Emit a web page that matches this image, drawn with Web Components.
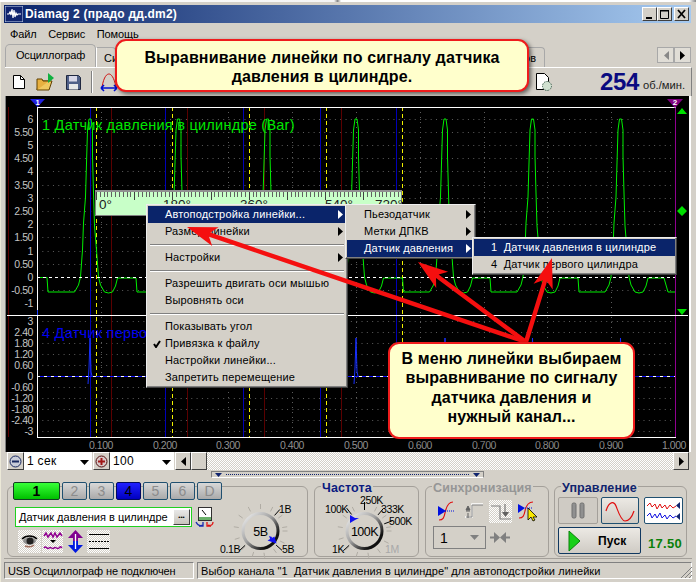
<!DOCTYPE html>
<html><head><meta charset="utf-8"><title>Diamag 2</title>
<style>
html,body{margin:0;padding:0;width:696px;height:582px;overflow:hidden;background:#d4d0c8}
body{font:11px "Liberation Sans",Arial,sans-serif;color:#000}
</style></head><body>
<dm-app>
  <dm-title slot="main" label="Diamag 2 (прадо дд.dm2)"></dm-title>
  <dm-menubar slot="main"></dm-menubar>
  <dm-tabs slot="main"></dm-tabs>
  <dm-toolbar slot="main"></dm-toolbar>
  <dm-scope slot="main"></dm-scope>
  <dm-ctrl slot="main"></dm-ctrl>
  <dm-split slot="main"></dm-split>
  <dm-panel slot="main"></dm-panel>
  <dm-status slot="main"></dm-status>

  <dm-ruler slot="over"></dm-ruler>
  <dm-popup slot="over" style="left:146px;top:204px;width:202px">
    <dm-item hl arrow>Автоподстройка линейки...</dm-item>
    <dm-item arrow>Размер линейки</dm-item>
    <dm-sep></dm-sep>
    <dm-item arrow>Настройки</dm-item>
    <dm-sep></dm-sep>
    <dm-item>Разрешить двигать оси мышью</dm-item>
    <dm-item>Выровнять оси</dm-item>
    <dm-sep></dm-sep>
    <dm-item>Показывать угол</dm-item>
    <dm-item check>Привязка к файлу</dm-item>
    <dm-item>Настройки линейки...</dm-item>
    <dm-item>Запретить перемещение</dm-item>
  </dm-popup>
  <dm-popup slot="over" style="left:345px;top:204px;width:131px">
    <dm-item arrow>Пьезодатчик</dm-item>
    <dm-item arrow>Метки ДПКВ</dm-item>
    <dm-item hl arrow>Датчик давления</dm-item>
  </dm-popup>
  <dm-popup slot="over" style="left:472px;top:237px;width:205px">
    <dm-item hl wide>1  Датчик давления в цилиндре</dm-item>
    <dm-item wide>4  Датчик первого цилиндра</dm-item>
  </dm-popup>
  <dm-arrows slot="over"></dm-arrows>
  <dm-callout slot="over" style="left:115px;top:39px;width:414px;height:53px;font-size:16px;line-height:19px;padding-top:2px;letter-spacing:.15px">Выравнивание линейки по сигналу датчика<br>давления в цилиндре.</dm-callout>
  <dm-callout slot="over" style="left:388px;top:342px;width:247px;height:97px;font-size:16px;line-height:19.3px;padding-bottom:6px;letter-spacing:.1px">В меню линейки выбираем<br>выравнивание по сигналу<br>датчика давления и<br>нужный канал...</dm-callout>
</dm-app>
<script>
const TXT="font-family:'Liberation Sans',Arial,sans-serif;";
const DITHER='repeating-conic-gradient(#fff 0 25%,#d4d0c8 0 50%) 0 0/2px 2px';
function def(name,css,html,init){
  customElements.define(name,class extends HTMLElement{
    constructor(){super();const s=this.attachShadow({mode:'open'});
      s.innerHTML='<style>'+css+'</style>'+(typeof html==='function'?html(this):html);}
    connectedCallback(){if(init)init(this);}
  });
}
/* ---------- app shell ---------- */
def('dm-app',`:host{display:block;position:relative;width:696px;height:582px;overflow:hidden;background:#d4d0c8}
.sl{height:2px;background:linear-gradient(90deg,#fff,#f4f4f4 48%,#888 48.5%,#fff 49%,#fff 99%,#888)}
.w{display:flex;flex-direction:column;height:580px;border-left:1px solid #ece9d8;box-sizing:border-box}
::slotted(*){flex:none}
`,`<div class="sl"></div><div class="w"><slot name="main"></slot></div><slot name="over"></slot>`);

def('dm-title',`:host{display:flex;align-items:center;height:18px;margin:3px 5px 0 3px;padding-left:1px;
 background:linear-gradient(90deg,#0a246a,#a6caf0);color:#fff;font:bold 12px "Liberation Sans",sans-serif;letter-spacing:.2px}
svg.i{margin-right:2px;flex:none}.t{flex:1;white-space:pre}
.b{width:15px;height:14px;box-sizing:border-box;background:#d4d0c8;border:1px solid;border-color:#fff #404040 #404040 #fff;flex:none;display:block}
.r{display:flex;margin-right:2px}.b svg{display:block}`,
 t=>`<svg class="i" width="18" height="16" viewBox="0 0 18 16"><rect width="18" height="16" fill="#10246e" stroke="#c8d8f0"/><path d="M2 8h2l1-2 1 3 1-6 1 9 1-8 1 7 1-4 1 2 1-1h3" fill="none" stroke="#fff" stroke-width="1.2"/></svg><span class="t">${t.getAttribute('label')}</span>
 <div class="r"><span class="b"><svg width="13" height="12"><rect x="3" y="9" width="6" height="2"/></svg></span><span class="b" style="margin-right:2px"><svg width="13" height="12"><path d="M2.5 2.5h8v8h-8z" fill="none" stroke="#000"/><path d="M2 2h9v1.5H2z"/></svg></span><span class="b"><svg width="13" height="12"><path d="M3 2l7 8M10 2l-7 8" stroke="#000" stroke-width="1.8"/></svg></span></div>`);

def('dm-menubar',`:host{display:flex;height:19px;align-items:center;gap:11.500px;padding-left:9px;margin-top:1px;letter-spacing:-.1px}`,
 `<span>Файл</span><span>Сервис</span><span>Помощь</span>`);

def('dm-tabs',`:host{display:flex;height:24px;align-items:flex-end;padding-left:4px;position:relative}
.a{width:91px;height:23px;box-sizing:border-box;border:1px solid #a8a8a8;border-bottom:0;border-radius:5px 5px 0 0;background:#d4d0c8;display:flex;align-items:center;justify-content:center;letter-spacing:-.15px;padding-bottom:2px}
.o{height:20px;box-sizing:border-box;border:1px solid #a8a8a8;border-left-color:#fff;border-bottom:0;background:#d4d0c8;border-radius:0 4px 0 0;display:flex;align-items:center;justify-content:flex-end;padding-right:8px}
.n{margin-left:auto;margin-right:5px;margin-bottom:4px;display:flex}
.n i{width:17px;height:16px;box-sizing:border-box;border:1px solid #a8a8a8;display:flex;align-items:center;justify-content:center;background:#e0ddd6}`,
 `<div class="a">Осциллограф</div><div class="o" style="width:20px;padding:0 0 0 7px;justify-content:flex-start">Си</div><div class="o" style="width:429px">ов</div>
 <div class="n"><i><svg width="6" height="9"><path d="M6 0v9L1 4.500z" fill="#888"/></svg></i><i><svg width="6" height="9"><path d="M0 0v9l5-4.500z"/></svg></i></div>`);

def('dm-toolbar',`:host{display:flex;height:29px;align-items:center;margin:0 4px;box-sizing:border-box;border-top:1px solid #fff;border-right:1px solid #808080;padding-left:7px}
svg{display:block;flex:none}.sp{flex:1}
.n{font:bold 24px "Liberation Sans",sans-serif;color:#0a0a80;letter-spacing:-.4px;margin:0 4px 0 0;position:relative}
.u{color:#202020;margin-right:6px;padding-top:5px;font-size:11.2px}`,
 `<svg width="14" height="16" style="margin-right:10px"><path d="M1.500 1.500h7l4 4v9h-11z" fill="#fff" stroke="#000"/><path d="M8.500 1.500v4h4" fill="none" stroke="#000"/></svg>
 <svg width="19" height="19" style="margin-right:11px"><path d="M1 17l2-9h13l-3 9z" fill="#f0c860" stroke="#604000"/><path d="M1 17V6h5l1 2h6" fill="#e8b040" stroke="#604000"/><path d="M12 0l6 5-6 5z" fill="#10b040"/></svg>
 <svg width="15" height="15" style="margin-right:10px"><path d="M.5.5h12l2 2v12H.5z" fill="#506088" stroke="#202840"/><rect x="3" y="1" width="8" height="5.500" fill="#d8d8e8"/><rect x="3" y="9" width="9" height="5.500" fill="#e8e8e8"/></svg>
 <svg width="2" height="22" style="margin-right:7px"><rect width="1" height="22" fill="#808080"/><rect x="1" width="1" height="22" fill="#fff"/></svg>
 <svg width="20" height="20"><path d="M2 15C4 4 7 2 9 2s5 3 7 13" fill="none" stroke="#d01010"/><path d="M1 16h16M1 16l3-3M1 16l3 3M17 16l-3-3M17 16l-3 3" stroke="#0010d0" stroke-width="1.600" fill="none"/></svg>
 <span class="sp"></span>
 <svg width="18" height="20" style="margin-right:47px"><path d="M1.500 1.500h8l4 4v12h-12z" fill="#fff" stroke="#000"/><circle cx="12" cy="14" r="4.500" fill="#d0e0d0" stroke="#406050" stroke-dasharray="1.500 1"/></svg>
 <span class="n">254</span><span class="u">об./мин.</span>`);

/* ---------- scope ---------- */
def('dm-scope',`:host{display:flex;height:356px;margin-left:4px;margin-right:5px;box-sizing:border-box;border-right:2px solid #fff;border-top:0}
svg{display:block;flex:none}`,
()=>{
 let o='';
 const L=37,R=675,T=107,B=437;
 const dot=(x1,y1,x2,y2,da,c)=>`<line x1="${x1}" y1="${y1}" x2="${x2}" y2="${y2}" stroke="${c||'#5c5c5c'}" stroke-dasharray="${da}"/>`;
 const hl=(x,c,d)=>`<line x1="${x+.5}" y1="${T}" x2="${x+.5}" y2="${B}" stroke="${c}" ${d?`stroke-dasharray="${d}"`:''}/>`;
 for(let k=-1;k<=12;k++){if(k==0)continue;o+=dot(L,Math.round(277-13.2*k)+.5,R,Math.round(277-13.2*k)+.5,'1 4.320');}
 for(let k=-5;k<=5;k++){if(k==0)continue;o+=dot(L,376.5-11*k,R,376.5-11*k,'1 4.320');}
 for(let k=1;k<10;k++){const x=Math.round(37+63.8*k)+.5;o+=dot(x,T,x,B,'1 4');}
 [8,111,187,264,341].forEach(x=>o+=hl(x,'#5a0000'));
 [90,165,243,320,396].forEach(x=>o+=hl(x,'#0000b8'));
 [96,172,249,326,402].forEach(x=>o+=hl(x,'#f0f000','4 3'));
 o+=hl(675,'#900090');
 /* traces */
 const P=[89.5,178,267,355.5,444.5,532,620];
 const pulse=p=>`L${p-15} 292L${p-11} 285L${p-9} 277L${p-7} 250L${p-6} 223L${p-4} 197L${p-3} 163L${p-2} 130L${p-.5} 119L${p+1.500} 119L${p+3} 130L${p+3} 156L${p+4} 193L${p+5} 226L${p+7} 250L${p+9} 277L${p+11} 285L${p+15} 292L${p+19} 293L${p+23} 292L${p+26} 286L${p+28} 278`;
 let d=`M37 277.500H47L48 292`;
 P.forEach((p,i)=>{d+=pulse(p);const n=P[i+1];if(n)d+=`H${n-42}L${n-41} 292`;});
 d+=`L664 278L668 292H675`;
 o+=`<path d="${d}" fill="none" stroke="#00f000"/>`;
 o+=`<line x1="${L}" y1="277.500" x2="${R}" y2="277.500" stroke="#fff" stroke-dasharray="3 3"/>`;
 o+=`<line x1="${L}" y1="376.500" x2="${R}" y2="376.500" stroke="#1010ff" stroke-width="1"/><line x1="${L}" y1="376.500" x2="${R}" y2="376.500" stroke="#fff" stroke-dasharray="3 4"/>`;
 P.forEach((p,i)=>{const q=p-1.500;o+=`<path d="M${q} 384L${q+1} 368L${q+2} 338L${q+3} 372L${q+4} 376" fill="none" stroke="#1830ff"/>`;});
 /* axes */
 o+=`<path d="M37.500 107V310M37.500 316V437M${L} 437.500H${R+1}M${L} 107.500H${R+1}" stroke="#fff" fill="none"/><path d="M37.500 310V316" stroke="#2040ff"/><path d="M7 315.500H688" stroke="#fff"/>`;
 /* labels */
 const gt=(x,y,t,a,c)=>`<text x="${x}" y="${y}" text-anchor="${a}" fill="${c}" style="${TXT}font-size:10.5px;letter-spacing:-.45px">${t}</text>`;
 ['6','5.50','5','4.50','4','3.50','3','2.50','2','1.50','1','0.50','0','-0.50','-1'].forEach((t,i)=>o+=gt(33,Math.round(118.600+13.2*i)+4,t,'end','#c4c4c4'));
 ['3','2.40','1.80','1.20','0.60','0','-0.60','-1.20','-1.80','-2.40','-3'].forEach((t,i)=>o+=gt(33,321+11*i+4,t,'end','#c4c4c4'));
 ['0.100','0.200','0.300','0.400','0.500','0.600','0.700','0.800','0.900'].forEach((t,i)=>o+=gt(Math.round(37+63.8*(i+1)),449,t,'middle','#909090'));
 o+=gt(674,449,'1.000','middle','#909090');
 o+=`<text x="42" y="130" fill="#00e800" style="${TXT}font-size:14.5px;letter-spacing:.25px">1 Датчик давления в цилиндре (Bar)</text>`;
 o+=`<text x="42" y="338" fill="#0000f0" style="${TXT}font-size:14.5px;letter-spacing:.25px">4 Датчик первого цилиндра</text>`;
 /* markers */
 o+=`<path d="M30 99H45L37.500 107z" fill="#2020e0"/><text x="37.500" y="105" text-anchor="middle" fill="#fff" style="${TXT}font-size:7.500px;font-weight:bold">1</text>`;
 o+=`<path d="M667 99H683L675 108z" fill="#800080"/><text x="675" y="105" text-anchor="middle" fill="#fff" style="${TXT}font-size:8px;font-weight:bold">2</text>`;
 o+=`<path d="M682 108l5 6h-10zM682 206l5 5-5 5-5-5zM677 309h10l-5 6z" fill="#00e000"/>`;
 return `<svg width="684" height="356" viewBox="5 96 684 356"><rect x="5" y="96" width="684" height="356" fill="#000"/><rect x="5" y="96" width="1" height="356" fill="#808080"/>${o}</svg>`;
});

/* ---------- time/scale row ---------- */
def('dm-ctrl',`:host{display:flex;height:18px;margin-left:6px;margin-right:7px;align-items:stretch;font-size:12px}
.b{width:17px;box-sizing:border-box;background:#d4d0c8;border:1px solid;border-color:#fff #404040 #404040 #fff;display:flex;align-items:center;justify-content:center;flex:none}
.c{background:#fff;display:flex;align-items:center;padding-left:3px;box-sizing:border-box;position:relative;flex:none;justify-content:space-between;padding-right:3px;letter-spacing:.3px}
.c svg{margin-top:2px}.tr{flex:1;background:${DITHER}}`,
 `<span class="b"><svg width="13" height="13"><circle cx="6.500" cy="6.500" r="5.500" fill="#c8ccd8" stroke="#182860"/><rect x="3" y="5.500" width="7" height="2" fill="#182860"/></svg></span>
 <span class="c" style="width:68px">1 сек<svg width="9" height="5"><path d="M0 0h9L4.500 5z"/></svg></span>
 <span class="b" style="margin-left:1px"><svg width="13" height="13"><circle cx="6.500" cy="6.500" r="5.500" fill="#d8c8c8" stroke="#501010"/><path d="M3 5.500h2.500V3h2v2.500H10v2H7.500V10h-2V7.500H3z" fill="#a01818"/></svg></span>
 <span class="c" style="width:64px">100<svg width="9" height="5"><path d="M0 0h9L4.500 5z"/></svg></span>
 <span class="b" style="margin-left:1px;width:16px"><svg width="5" height="9"><path d="M5 0v9L0 4.500z"/></svg></span>
 <span class="b" style="width:16px"></span><span class="tr"></span>
 <span class="b" style="width:16px"><svg width="5" height="9"><path d="M0 0v9l5-4.500z"/></svg></span>`);

def('dm-split',`:host{display:flex;height:10px;align-items:flex-start;padding-left:210px;box-sizing:border-box}
.h{width:273px;height:7px;margin-top:1px;box-sizing:border-box;border:1px solid;border-color:#808080 #808080 #fff #808080;background:#d4d0c8;display:flex;align-items:center;gap:4px;padding:0 3px;justify-content:space-between}
.d{flex:1;border-top:1px dotted #10246e}`,
 `<div class="h"><svg width="7" height="4"><path d="M0 0h7L3.500 4z" fill="#10246e"/></svg><span class="d"></span><svg width="7" height="4"><path d="M0 0h7L3.500 4z" fill="#10246e"/></svg></div>`);

/* ---------- bottom panel ---------- */
def('dm-group',`:host{display:block;position:relative;box-sizing:border-box;height:71px;border:1px solid #a4a09a;border-radius:6px;margin-top:6px;flex:none}
.t{position:absolute;top:-5px;left:6px;background:#d4d0c8;padding:0 1px;font:bold 12.5px/13px "Liberation Sans",sans-serif;letter-spacing:.1px;color:var(--tc,#0a1a80);white-space:nowrap}`,
 t=>(t.getAttribute('heading')?`<span class="t">${t.getAttribute('heading')}</span>`:'')+`<slot></slot>`);

def('dm-chan',`:host{display:flex;align-items:center;justify-content:center;height:18px;box-sizing:border-box;border:1px solid #205070;border-radius:2px;background:linear-gradient(#d8d8d8,#aaa);color:#8c8c8c;font:14px "Liberation Sans",sans-serif;flex:none}
:host([g]){background:linear-gradient(#38ff38,#00c000);color:#000;font-weight:bold;border-color:#104020}
:host([b]){background:linear-gradient(#2020ff,#0000c0);color:#000;border-color:#000860}`,`<slot></slot>`);

function knob(w,h,cx,cy,ang,blk,labels,mid,ptr){
 let o='';
 for(let a=0;a<360;a+=ang.step){
   const deg=a+ang.start;
   const r=deg*Math.PI/180;
   o+=`<line x1="${cx+Math.cos(r)*22}" y1="${cy+Math.sin(r)*22}" x2="${cx+Math.cos(r)*27}" y2="${cy+Math.sin(r)*27}" stroke="#b0aca4"/>`;
 }
 blk.forEach(b=>{const r=b*Math.PI/180;o+=`<line x1="${cx+Math.cos(r)*21}" y1="${cy+Math.sin(r)*21}" x2="${cx+Math.cos(r)*29}" y2="${cy+Math.sin(r)*29}" stroke="#000"/>`;});
 const id='k'+w+cx;
 return `<svg width="${w}" height="${h}" style="display:block;overflow:visible"><defs><linearGradient id="${id}" x1="0" y1="0" x2="1" y2="1"><stop offset="0" stop-color="#f4f4f4"/><stop offset=".45" stop-color="#a0a0a0"/><stop offset=".8" stop-color="#101010"/></linearGradient></defs>${o}<circle cx="${cx}" cy="${cy}" r="17.500" fill="#d4d0c8" stroke="url(#${id})" stroke-width="3"/>${ptr}
 <text x="${cx}" y="${cy+4.500}" text-anchor="middle" style="${TXT}font-size:12.500px;letter-spacing:-.5px">${mid}</text>
 ${labels.map(l=>`<text x="${l[0]}" y="${l[1]}" fill="${l[3]||'#000'}" style="${TXT}font-size:10.500px;letter-spacing:-.4px">${l[2]}</text>`).join('')}</svg>`;
}

def('dm-panel',`:host{display:flex;height:78px;padding-left:6px;gap:6px;box-sizing:border-box;flex:none}
.row{display:flex}
.l{padding-left:5px;width:216px;margin-top:-5px;flex:none}
.ch{display:flex;gap:2px;height:18px}
.cb{display:flex;align-items:center;margin:7px 0 0 2px;height:20px}
.f{width:177px;height:20px;box-sizing:border-box;border:1px solid #20d020;background:#fff;display:flex;align-items:center;padding-left:3px;justify-content:space-between;font-size:11px;white-space:nowrap}
.f i{width:17px;height:16px;margin-right:1px;box-sizing:border-box;background:linear-gradient(#e8e8e8,#c8c4bc);border:1px solid;border-color:#fff #404040 #404040 #fff;display:flex;align-items:center;justify-content:center;font:bold 6px "Liberation Sans",sans-serif;font-style:normal;letter-spacing:0}
.ic{display:flex;margin:3px 0 0 5px;align-items:center;height:23px}
.ic svg{display:block;flex:none}
.dt{background:${DITHER}}
.knob{position:relative}
.syn{display:flex;flex-direction:column;padding:13px 0 0 7px;box-sizing:border-box}
.syn svg{display:block;flex:none}
.cmb{width:53px;height:23px;box-sizing:border-box;border:1px solid #808080;display:flex;align-items:center;justify-content:space-between;padding:0 6px 0 6px;font-size:14px}
.ct{display:grid;grid-template-columns:40px 38px 40px;grid-template-rows:27px 27px;gap:3px 3px;padding:10px 0 0 3px;column-gap:3px}
.cb2{box-sizing:border-box;border:1px solid #205070;border-radius:2px;background:linear-gradient(#ece9e4,#cfcbc4);display:flex;align-items:center;justify-content:center}
.go{grid-column:1/3;justify-content:flex-start;font:bold 12px "Liberation Sans",sans-serif;letter-spacing:.2px;border-color:#103860;border-width:1.500px;width:83px}
.v{color:#0a800a;font:bold 13px "Liberation Sans",sans-serif;letter-spacing:.3px;display:flex;align-items:flex-end;justify-content:flex-end;padding-bottom:3px;margin-left:3px}`,
 `<dm-group style="width:301px"><div class="row">
   <div class="l">
    <div class="ch"><dm-chan g style="width:47px">1</dm-chan><dm-chan style="width:25px">2</dm-chan><dm-chan style="width:25px">3</dm-chan><dm-chan b style="width:25px">4</dm-chan><dm-chan style="width:25px">5</dm-chan><dm-chan style="width:25px">6</dm-chan><dm-chan style="width:25px">D</dm-chan></div>
    <div class="cb"><div class="f">Датчик давления в цилиндре<i>•••</i></div>
      <svg width="20" height="21" style="margin-left:3px"><rect x="3.500" y=".5" width="13" height="13" fill="#fff" stroke="#303030"/><rect x="4" y="10" width="12" height="3" fill="#6ab06a"/><path d="M7 3l4 5" stroke="#000"/><path d="M1 15c2 4 5 4 7 3M8 15v4H4" fill="none" stroke="#1a2ab0" stroke-width="1.300"/><path d="M18 15c0 3-2 4-5 3M12 15v4h4" fill="none" stroke="#e01010" stroke-width="1.300"/></svg></div>
    <div class="ic">
      <svg class="dt" width="23" height="23"><ellipse cx="11.500" cy="11" rx="6.500" ry="3.500" fill="#909090"/><circle cx="12" cy="11" r="3.500" fill="#202020"/><path d="M4 9c4-4 11-4 15 0" stroke="#000" fill="none" stroke-width="1.500"/><path d="M7 16c3 1 7 1 9-1" stroke="#a07060" fill="none" stroke-width="1.500"/></svg>
      <svg class="dt" width="21" height="23" style="margin-left:1px"><path d="M2 6l2-3 2 4 3-4 2 4 2-4 2 4 3-4 2 3" fill="none" stroke="#900090" stroke-width="1.500"/><path d="M8 10h6l-3 3z"/><path d="M2 18c2-3 3 2 5 0s3 2 5 0 3 2 5 0 2-1 3 0" fill="none" stroke="#900090" stroke-width="1.500"/></svg>
      <svg width="17" height="23" style="margin-left:4px"><path d="M8.500 0L16 8h-5v3H6V8H1z" fill="#800090"/><path d="M8.500 23L16 15h-5v-4H6v4H1z" fill="#0018e0"/><path d="M8.500 4v15" stroke="#fff" stroke-width="1.300"/></svg>
      <svg class="dt" width="23" height="23" style="margin-left:3px"><path d="M2 4.500h20M2 18.500h20" stroke="#000"/><path d="M2 11.500h20" stroke="#000" stroke-dasharray="2 1"/></svg>
    </div>
   </div>
   <div class="knob" style="margin-left:-7px">${knob(84,68,38.500,44,{start:0,step:27},[-48,42,137],[[57,26,'1В'],[-2,66,'0.1В'],[60,66,'5В']],'5В',`<path d="M45.500 53.500l7-4 2 7z" fill="#1010f0"/><path d="M47 49l3 1-1 4z" fill="#1010f0"/>`)}</div>
 </div></dm-group>
 <dm-group heading="Частота" style="width:105px"><div class="knob">${knob(103,68,49.500,44,{start:0,step:27},[-128,-90,-50,-20,137],[[10,26,'100K'],[45,17,'250K'],[66,26,'333K'],[74,38,'500K'],[17,66,'1K'],[70,66,'1M','#a8a8a8']],'100K',`<path d="M35 28l5 3 4 0-4 2-5 3z" fill="#1010f0"/>`)}</div></dm-group>
 <dm-group heading="Синхронизация" style="width:124px;--tc:#969696"><div class="syn">
   <div class="row" style="align-items:center;height:23px;margin-left:4px">
    <svg width="20" height="21"><path d="M2 19c4 0 5-2 6-7s3-11 8-11" fill="none" stroke="#e01010" stroke-width="1.200"/><path d="M1 5l8 5-8 5z" fill="#0010e0"/><path d="M8 10h10" stroke="#0010e0" stroke-dasharray="1 1"/></svg>
    <svg width="19" height="21" style="margin-left:8px"><path d="M0 16h7V3h11" fill="none" stroke="#fff" stroke-width="1.500"/><path d="M1 16h6V4h11" fill="none" stroke="#808080"/><path d="M5 10h-4M3 5l2 4H1zM3 17v-5" stroke="#606060" fill="#606060"/></svg>
    <svg class="dt" width="23" height="23" style="margin-left:5px"><path d="M2 6h9v13h11" fill="none" stroke="#808080" stroke-width="1.200"/><path d="M16 4v9" stroke="#606060"/><path d="M13 12h7l-3.500 5z" fill="#606060"/></svg>
    <svg width="20" height="23" style="margin-left:6px"><path d="M1 18c4 0 5-2 6-7s3-9 8-9" fill="none" stroke="#e01010" stroke-width="1.200"/><path d="M0 4l7 4-7 5z" fill="#0010e0"/><path d="M7 8h8" stroke="#0010e0" stroke-dasharray="1 1"/><path d="M10 8v12l3-3 2 4 2-1-2-3h4z" fill="#f8e800" stroke="#000" stroke-width=".8"/></svg>
   </div>
   <div class="row" style="align-items:center;margin-top:3px"><div class="cmb">1<svg width="9" height="5"><path d="M0 0h9L4.500 5z" fill="#808080"/></svg></div>
    <svg width="20" height="13" style="margin-left:4px"><path d="M0 6.500h7M20 6.500h-7" stroke="#808080" stroke-width="2"/><path d="M4 1l6 5.500L4 12zM16 1l-6 5.500 6 5.500z" fill="#808080"/></svg></div>
 </div></dm-group>
 <dm-group heading="Управление" style="width:133px;margin-left:-1px;--tc:#10246e"><div class="ct">
   <div class="cb2" style="border-color:#a4a09a;background:#cfcbc4;"><svg width="14" height="17"><rect x="1" y="1" width="4" height="15" rx="1.500" fill="#909090" stroke="#707070"/><rect x="9" y="1" width="4" height="15" rx="1.500" fill="#909090" stroke="#707070"/></svg></div>
   <div class="cb2"><svg width="30" height="22"><path d="M1 11C4 1 9 1 11 6s5 15 9 15 7-4 9-10" fill="none" stroke="#e01010" stroke-width="1.200"/></svg></div>
   <div class="cb2" style="background:#fff;margin-left:2px;width:39px"><svg width="35" height="22"><path d="M1 6l3-3 2 4 3-3 2 5 3-5 2 4 3-3 2 4 3-4 3 3 3-2" fill="none" stroke="#e01010"/><path d="M1 16l3-3 2 5 3-4 2 4 3-5 2 5 3-3 2 4 3-4 3 3 3-2" fill="none" stroke="#1010e0"/><path d="M34 2v7l-4-3.500zM34 13v7l-4-3.500z" fill="#10246e"/></svg></div>
   <div class="cb2 go"><svg width="13" height="22" style="margin:0 17px 0 9px"><path d="M1 1l11 10L1 21z" fill="#18d018" stroke="#0a800a"/></svg>Пуск</div>
   <div class="v" style="grid-column:3">17.50</div>
 </div></dm-group>`);

def('dm-status',`:host{display:flex;height:17px;flex:none;margin:0 4px 0 3px;gap:3px;align-items:stretch;border-top:1px solid #a4a09a;padding-top:3px;box-sizing:content-box;font-size:11px;position:relative}
span{box-sizing:border-box;border:1px solid;border-color:#808080 #fff #fff #808080;display:flex;align-items:center;padding-left:3px;white-space:pre;height:17px}
svg{position:absolute;right:0;bottom:1px}`,
 `<span style="width:190px;letter-spacing:-.1px">USB Осциллограф не подключен</span><span style="flex:1;letter-spacing:.06px">Выбор канала "1  Датчик давления в цилиндре" для автоподстройки линейки</span>
 <svg width="12" height="12"><path d="M12 1L1 12M12 5l-7 7M12 9l-3 3" stroke="#808080"/></svg>`);

/* ---------- overlays ---------- */
def('dm-ruler',`:host{position:absolute;left:95px;top:190px;width:307px;height:26px;background:#c8ffc8;box-sizing:border-box;border:1px solid #808080;border-top:2px solid #909090}
.t{position:absolute;left:0;right:0;top:0;height:5px;background:repeating-linear-gradient(90deg,#606060 0 1px,transparent 1px 3.820px)}
.t2{position:absolute;left:0;right:0;top:0;height:8px;background:repeating-linear-gradient(90deg,#404040 0 1px,transparent 1px 38.200px)}
b{position:absolute;top:5px;font:13.5px "Liberation Sans",sans-serif;color:#202020}`,
 `<div class="t"></div><div class="t2"></div><b style="left:3px">0°</b><b style="left:67px">180°</b><b style="left:144px">360°</b><b style="left:229px">540°</b><b style="left:279px">720°</b>`);

def('dm-popup',`:host{position:absolute;display:block;box-sizing:border-box;padding:1px;background:#d4d0c8;border:1px solid;border-color:#eee #404040 #404040 #eee;box-shadow:inset -1px -1px 0 #808080;letter-spacing:.15px}`,`<slot></slot>`);
def('dm-item',`:host{display:block;height:17px;line-height:17px;padding-left:17px;position:relative;white-space:pre;font-size:11px;color:#000}
:host([hl]){background:#0a246a;color:#fff}
svg{position:absolute}
.a{right:3px;top:4px}.c{left:5px;top:5px}
`,t=>`<slot></slot>`+(t.hasAttribute('arrow')?`<svg class="a" width="5" height="9"><path d="M0 0v9l5-4.500z" fill="${t.hasAttribute('hl')?'#fff':'#000'}"/></svg>`:'')+(t.hasAttribute('check')?`<svg class="c" width="8" height="8"><path d="M1 4l2 3 4-6" fill="none" stroke="#000" stroke-width="2"/></svg>`:''));
def('dm-sep',`:host{display:flex;height:9px;align-items:center;padding:0 2px}
i{display:block;flex:1;border-top:1px solid #808080;border-bottom:1px solid #fff}`,`<i></i>`);
def('dm-callout',`:host{position:absolute;display:flex;align-items:center;justify-content:center;text-align:center;box-sizing:border-box;background:#ffffcc;border:2px solid #ef1c1c;border-radius:11px;box-shadow:2px 2px 4px rgba(0,0,0,.55);font-family:"Liberation Sans",Arial,sans-serif;font-weight:bold;color:#000}`,`<div><slot></slot></div>`);
def('dm-arrows',`:host{position:absolute;left:0;top:0;width:696px;height:582px;pointer-events:none;display:block}svg{display:block}`,()=>{
 const from=[526,342];
 const ar=(tip,w)=>{const dx=tip[0]-from[0],dy=tip[1]-from[1],l=Math.hypot(dx,dy),u=dx/l,v=dy/l,nx=-v,ny=u,hl=30,hw=10,sw=w;
  const P=(a,b)=>(tip[0]-u*a+nx*b).toFixed(1)+','+(tip[1]-v*a+ny*b).toFixed(1);
  return `<polygon points="${tip.join(',')} ${P(hl,hw)} ${P(hl-6,sw)} ${(from[0]+nx*sw).toFixed(1)},${(from[1]+ny*sw).toFixed(1)} ${(from[0]-nx*sw).toFixed(1)},${(from[1]-ny*sw).toFixed(1)} ${P(hl-6,-sw)} ${P(hl,-hw)}" fill="#f50f0f"/>`;};
 return `<svg width="696" height="582">${ar([187,227],2.2)}${ar([418,262],2.2)}${ar([552,258],2.2)}</svg>`;
});
</script>
</body></html>
